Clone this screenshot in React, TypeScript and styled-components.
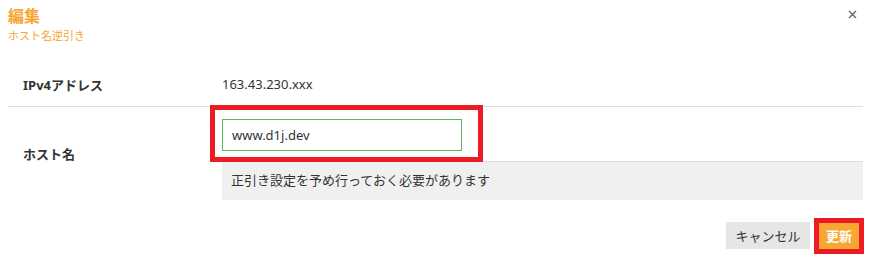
import React from 'react';
import styled, { createGlobalStyle } from 'styled-components';

const GlobalStyle = createGlobalStyle`
    html, body {
        margin: 0;
        padding: 0;
        background: #ffffff;
    }
    body {
        font-family: "Noto Sans", "Noto Sans CJK JP", sans-serif;
        color: #333333;
    }
`;

const App: React.FC = () => {
    return (
        <>
            <GlobalStyle />
            <Modal>
                <Header>
                    <div>
                        <Title>編集</Title>
                        <SubTitle>ホスト名逆引き</SubTitle>
                    </div>
                    <CloseButton aria-label="close">
                        <svg width="9" height="9" viewBox="0 0 9 9">
                            <path d="M1 1L8 8M8 1L1 8" stroke="#666" strokeWidth="1.4" />
                        </svg>
                    </CloseButton>
                </Header>
                <Table>
                    <Row bordered>
                        <Label>IPv4アドレス</Label>
                        <Value>163.43.230.xxx</Value>
                    </Row>
                    <Row>
                        <Label>ホスト名</Label>
                        <Cell>
                            <InputWrap>
                                <Input defaultValue="www.d1j.dev" />
                                <InputMark />
                            </InputWrap>
                            <Hint>正引き設定を予め行っておく必要があります</Hint>
                        </Cell>
                    </Row>
                </Table>
                <Footer>
                    <CancelButton>キャンセル</CancelButton>
                    <SubmitWrap>
                        <SubmitButton>更新</SubmitButton>
                        <SubmitMark />
                    </SubmitWrap>
                </Footer>
            </Modal>
        </>
    );
};

export default App;

const Modal = styled.div`
    width: 871px;
    height: 259px;
    box-sizing: border-box;
    padding: 5px 8px 0 8px;
`;

const Header = styled.div`
    display: flex;
    justify-content: space-between;
    align-items: flex-start;
    height: 57px;
`;

const Title = styled.div`
    font-size: 16px;
    font-weight: bold;
    color: #f7a533;
    line-height: 22px;
`;

const SubTitle = styled.div`
    font-size: 11px;
    color: #f7a533;
    line-height: 14px;
    margin-top: 2px;
`;

const CloseButton = styled.button`
    border: none;
    background: none;
    padding: 0;
    margin: 5px 6px 0 0;
    width: 9px;
    height: 9px;
    display: flex;
    cursor: pointer;
`;

const Table = styled.div`
    width: 855px;
    display: flex;
    flex-direction: column;
`;

const Row = styled.div<{ bordered?: boolean }>`
    display: grid;
    grid-template-columns: 214px 1fr;
    align-items: center;
    border-bottom: ${(props) => (props.bordered ? '1px solid #dddddd' : 'none')};
    min-height: 44px;
`;

const Label = styled.div`
    padding-left: 15px;
    font-size: 13px;
    font-weight: bold;
    color: #333333;
`;

const Value = styled.div`
    font-size: 13px;
    color: #333333;
`;

const Cell = styled.div`
    display: flex;
    flex-direction: column;
    padding-top: 12px;
`;

const InputWrap = styled.div`
    position: relative;
    width: 240px;
    height: 32px;
`;

const Input = styled.input`
    box-sizing: border-box;
    width: 240px;
    height: 32px;
    border: 1px solid #5cb85c;
    padding: 0 9px;
    font-family: "Noto Sans", "Noto Sans CJK JP", sans-serif;
    font-size: 13px;
    color: #333333;
    outline: none;
`;

const InputMark = styled.div`
    position: absolute;
    left: -12px;
    top: -14px;
    right: -21px;
    bottom: -11px;
    border: 5px solid #ed1c24;
    pointer-events: none;
`;

const Hint = styled.div`
    margin-top: 10px;
    height: 39px;
    box-sizing: border-box;
    border-top: 1px solid #dddddd;
    background: #f0f0f0;
    padding: 0 0 3px 9px;
    display: flex;
    align-items: center;
    font-size: 13px;
    color: #333333;
`;

const Footer = styled.div`
    display: flex;
    justify-content: flex-end;
    align-items: center;
    gap: 9px;
    width: 851px;
    margin-top: 22px;
`;

const CancelButton = styled.button`
    height: 27px;
    width: 84px;
    border: none;
    background: #e6e6e6;
    color: #333333;
    font-family: "Noto Sans", "Noto Sans CJK JP", sans-serif;
    font-size: 13px;
    padding: 0;
    cursor: pointer;
`;

const SubmitWrap = styled.div`
    position: relative;
    display: flex;
`;

const SubmitButton = styled.button`
    height: 26px;
    width: 40px;
    border: none;
    background: #f9a633;
    color: #ffffff;
    font-family: "Noto Sans", "Noto Sans CJK JP", sans-serif;
    font-size: 13px;
    font-weight: bold;
    padding: 0;
    cursor: pointer;
`;

const SubmitMark = styled.div`
    position: absolute;
    left: -5px;
    top: -5px;
    right: -5px;
    bottom: -5px;
    border: 5px solid #ed1c24;
    pointer-events: none;
`;
